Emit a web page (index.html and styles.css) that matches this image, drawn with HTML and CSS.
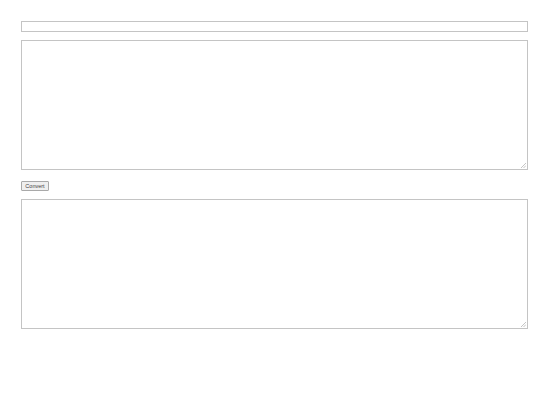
FILE: index.html
```html
<!DOCTYPE html>
<html lang="en">
<head>
    <meta charset="UTF-8">
    <title>Converter</title>
    <link rel="stylesheet" href="styles.css">
</head>
<body>
    <div class="wrap">
        <input type="text" class="source-url">
        <div class="field">
            <textarea class="box input-box"></textarea>
            <svg class="grip" width="5" height="5" viewBox="0 0 5 5"><path d="M5 0L0 5M5 2.5L2.5 5" stroke="#b8b8b8" stroke-width="0.8"/></svg>
        </div>
        <div class="actions">
            <button class="convert">Convert</button>
        </div>
        <div class="field">
            <textarea class="box output-box"></textarea>
            <svg class="grip" width="5" height="5" viewBox="0 0 5 5"><path d="M5 0L0 5M5 2.5L2.5 5" stroke="#b8b8b8" stroke-width="0.8"/></svg>
        </div>
    </div>
</body>
</html>
```

FILE: styles.css
```css
html, body {
    margin: 0;
    background: #fff;
    font-family: "Liberation Sans", Arial, sans-serif;
}

.wrap {
    padding: 21px 12px 0 21px;
    display: flex;
    flex-direction: column;
}

.source-url {
    box-sizing: border-box;
    width: 507px;
    height: 11px;
    margin: 0 0 8px 0;
    padding: 0;
    border: 1px solid #c4c4c4;
    outline: none;
}

.field {
    position: relative;
    width: 507px;
    height: 130px;
}

.box {
    display: block;
    box-sizing: border-box;
    width: 507px;
    height: 130px;
    margin: 0;
    padding: 2px;
    border: 1px solid #c4c4c4;
    resize: none;
    outline: none;
}

.grip {
    position: absolute;
    right: 2px;
    bottom: 2px;
}

.actions {
    display: flex;
    padding: 11px 0 8px 0;
}

.convert {
    box-sizing: border-box;
    height: 10px;
    width: 28px;
    padding: 0;
    font-size: 5.5px;
    line-height: 8px;
    color: #444;
    background: #efefef;
    border: 1px solid #a9a9a9;
    border-radius: 1px;
    font-family: "Liberation Sans", Arial, sans-serif;
}
```
